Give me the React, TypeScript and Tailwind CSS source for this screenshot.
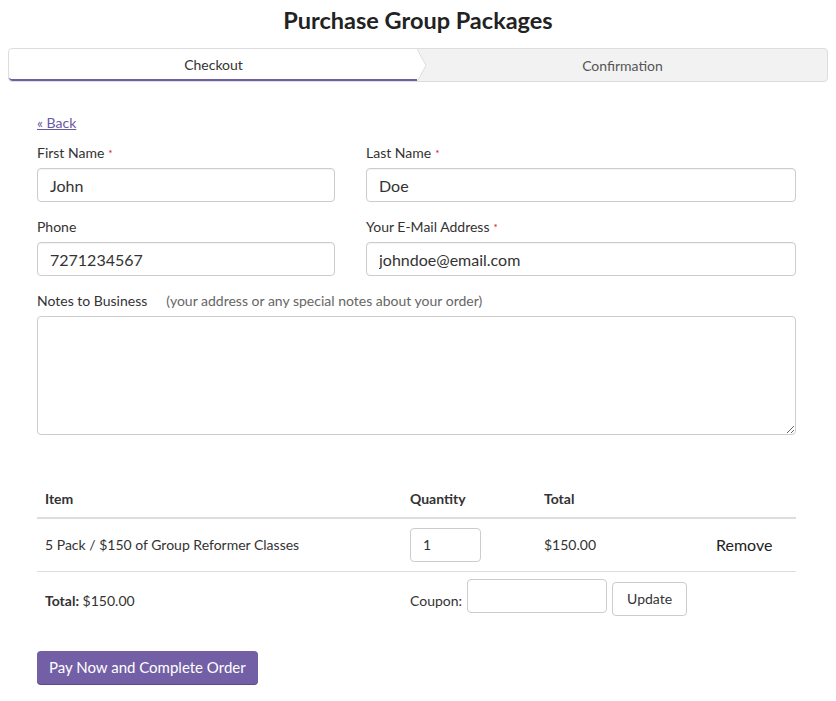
import React, { useState } from 'react';

const RequiredMark = () => <span className="text-[#d0021b] text-[10px] align-top ml-1">*</span>;

const App: React.FC = () => {
  const [form, setForm] = useState({
    first: 'John',
    last: 'Doe',
    phone: '7271234567',
    email: 'johndoe@email.com',
    notes: '',
  });
  const [qty, setQty] = useState('1');
  const [coupon, setCoupon] = useState('');

  const update = (key: keyof typeof form) => (e: React.ChangeEvent<HTMLInputElement | HTMLTextAreaElement>) =>
    setForm(prev => ({ ...prev, [key]: e.target.value }));

  const inputClass =
    'h-[34px] w-full rounded border border-[#cccccc] px-3 text-[16px] text-[#333] outline-none shadow-[inset_0_1px_1px_rgba(0,0,0,0.05)]';

  return (
    <div className="min-h-[701px] bg-white font-['Lato',sans-serif] text-[#333]">
      <h1 className="pt-[5px] text-center text-[23.5px] font-bold leading-[30px] text-[#222]">
        Purchase Group Packages
      </h1>

      {/* steps */}
      <div className="mx-2 mt-[13px] flex h-[34px] rounded border border-[#dddddd] bg-[#f2f2f2] text-[14px]">
        <div className="relative flex w-[409px] items-center justify-center rounded-l border-b-2 border-[#6f5fa8] bg-white text-[#333]">
          Checkout
          <svg className="absolute right-[-9px] top-0" width="10" height="33" viewBox="0 0 10 33">
            <polygon points="0,0 9,16.5 0,33" fill="#ffffff" />
            <polyline points="0,0 9,16.5 0,33" fill="none" stroke="#dddddd" strokeWidth="1" />
          </svg>
        </div>
        <div className="flex flex-1 items-center justify-center text-[#555]">Confirmation</div>
      </div>

      <div className="mx-[37px] mt-[28px] w-[759px]">
        <a href="#" className="text-[14px] text-[#6b57a5] underline">
          « Back
        </a>

        <div className="mt-[9px] flex gap-[31px]">
          <div className="flex w-[298px] flex-col">
            <label className="mb-[5px] text-[14px] leading-[20px]">
              First Name<RequiredMark />
            </label>
            <input className={inputClass} value={form.first} onChange={update('first')} />
          </div>
          <div className="flex flex-1 flex-col">
            <label className="mb-[5px] text-[14px] leading-[20px]">
              Last Name<RequiredMark />
            </label>
            <input className={inputClass} value={form.last} onChange={update('last')} />
          </div>
        </div>

        <div className="mt-[15px] flex gap-[31px]">
          <div className="flex w-[298px] flex-col">
            <label className="mb-[5px] text-[14px] leading-[20px]">Phone</label>
            <input className={inputClass} value={form.phone} onChange={update('phone')} />
          </div>
          <div className="flex flex-1 flex-col">
            <label className="mb-[5px] text-[14px] leading-[20px]">
              Your E-Mail Address<RequiredMark />
            </label>
            <input className={inputClass} value={form.email} onChange={update('email')} />
          </div>
        </div>

        <div className="mt-[15px] flex flex-col">
          <label className="mb-[5px] text-[14px] leading-[20px]">
            Notes to Business
            <span className="ml-[19px] text-[#666]">(your address or any special notes about your order)</span>
          </label>
          <textarea
            className="h-[119px] w-full rounded border border-[#cccccc] px-3 py-2 text-[16px] outline-none"
            value={form.notes}
            onChange={update('notes')}
          />
        </div>

        {/* cart */}
        <table className="mt-[44px] w-full border-collapse text-[14px]">
          <thead>
            <tr className="border-b-2 border-[#dddddd] text-left">
              <th className="h-[39px] w-[373px] px-2 font-bold">Item</th>
              <th className="w-[134px] px-0 font-bold">Quantity</th>
              <th className="w-[140px] px-0 font-bold">Total</th>
              <th />
            </tr>
          </thead>
          <tbody>
            <tr className="border-b border-[#dddddd]">
              <td className="h-[53px] px-2">5 Pack / $150 of Group Reformer Classes</td>
              <td>
                <input
                  className="h-[34px] w-[71px] rounded border border-[#cccccc] px-3 text-[14px] outline-none"
                  value={qty}
                  onChange={e => setQty(e.target.value)}
                />
              </td>
              <td>$150.00</td>
              <td className="pl-[32px] text-[16px]">
                <a href="#" className="text-[#222]">Remove</a>
              </td>
            </tr>
            <tr>
              <td className="h-[58px] px-2">
                <span className="font-bold">Total:</span> $150.00
              </td>
              <td colSpan={3}>
                <div className="flex items-start">
                  <span className="mt-[5px]">Coupon:</span>
                  <input
                    className="ml-[5px] mt-[-6px] h-[34px] w-[140px] rounded border border-[#cccccc] px-2 outline-none"
                    value={coupon}
                    onChange={e => setCoupon(e.target.value)}
                  />
                  <button className="ml-[5px] mt-[-3px] h-[34px] rounded border border-[#cccccc] bg-white px-[14px] text-[14px] text-[#333]">
                    Update
                  </button>
                </div>
              </td>
            </tr>
          </tbody>
        </table>

        <button className="mt-[22px] h-[33px] rounded bg-[#735fa5] px-3 text-[15px] text-white shadow-[0_1px_0_#5b4a8a]">
          Pay Now and Complete Order
        </button>
      </div>
    </div>
  );
};

export default App;
